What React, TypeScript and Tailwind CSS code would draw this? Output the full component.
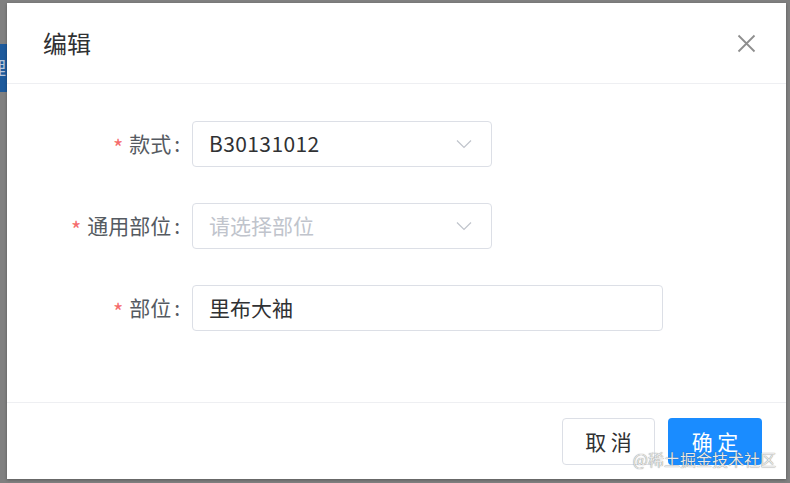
import React from "react";

const font = { fontFamily: '"Noto Sans CJK SC", "Noto Sans", sans-serif' };

function Chevron() {
  return (
    <svg width="16" height="10" viewBox="0 0 16 10" className="shrink-0">
      <path d="M1 1.5 L8 8.5 L15 1.5" fill="none" stroke="#c0c4cc" strokeWidth="1.2" />
    </svg>
  );
}

function Label({ text }: { text: string }) {
  return (
    <div className="w-[173px] shrink-0 flex items-center justify-end text-[21px] text-[#555a61]">
      <span className="text-[#f56c6c] text-[22px] mr-[6px] leading-none mt-[4px]">*</span>
      <span>{text}</span>
      <span className="ml-[3px]">:</span>
    </div>
  );
}

export default function App() {
  return (
    <div
      className="relative w-[790px] h-[483px] bg-[#808080] overflow-hidden pt-[3px] pl-[7px]"
      style={font}
    >
      <div className="absolute left-0 top-[44px] w-[7px] h-[48px] bg-[#1d5a9c] overflow-hidden">
        <span className="absolute left-[-12px] top-[14px] text-[18px] leading-none text-[#b8c7da]">理</span>
      </div>
      <div className="relative w-[779px] h-[476px] bg-white flex flex-col shadow-[0_1px_3px_rgba(0,0,0,0.3)]">
        <div className="h-[81px] shrink-0 flex items-center justify-between pl-[36px] pr-[30px] border-b border-[#eeeff2]">
          <span className="text-[24px] text-[#303133] leading-none">编辑</span>
          <svg width="19" height="19" viewBox="0 0 19 19">
            <path d="M1.5 1.5 L17.5 17.5 M17.5 1.5 L1.5 17.5" stroke="#8e8e8e" strokeWidth="1.8" />
          </svg>
        </div>
        <div className="flex-1 flex flex-col gap-[36px] pt-[37px]">
          <div className="flex items-center gap-[12px] h-[46px]">
            <Label text="款式" />
            <div className="w-[300px] h-[46px] border border-[#dcdfe6] rounded-[4px] flex items-center justify-between pl-[16px] pr-[19px]">
              <span className="text-[21px] text-[#303133] tracking-[0.4px]">B30131012</span>
              <Chevron />
            </div>
          </div>
          <div className="flex items-center gap-[12px] h-[46px]">
            <Label text="通用部位" />
            <div className="w-[300px] h-[46px] border border-[#dcdfe6] rounded-[4px] flex items-center justify-between pl-[16px] pr-[19px]">
              <span className="text-[21px] text-[#c0c4cc]">请选择部位</span>
              <Chevron />
            </div>
          </div>
          <div className="flex items-center gap-[12px] h-[46px]">
            <Label text="部位" />
            <div className="w-[471px] h-[46px] border border-[#dcdfe6] rounded-[4px] flex items-center pl-[16px]">
              <span className="text-[21px] text-[#303133]">里布大袖</span>
            </div>
          </div>
        </div>
        <div className="h-[77px] shrink-0 border-t border-[#eeeff2] flex justify-end items-start pt-[15px] pr-[24px] gap-[13px]">
          <div className="w-[93px] h-[47px] border border-[#dcdfe6] rounded-[4px] flex items-center justify-center text-[21px] text-[#303133]">
            取 消
          </div>
          <div className="relative w-[94px] h-[47px] bg-[#1a8cff] rounded-[4px] flex items-center justify-center text-[21px] text-white">
            确 定
          </div>
        </div>
        <div className="absolute right-[10px] bottom-[12px] text-[16px] leading-none text-[#e8e8e8] [text-shadow:0_0_1px_rgba(0,0,0,0.6)]">
          @稀土掘金技术社区
        </div>
      </div>
    </div>
  );
}
